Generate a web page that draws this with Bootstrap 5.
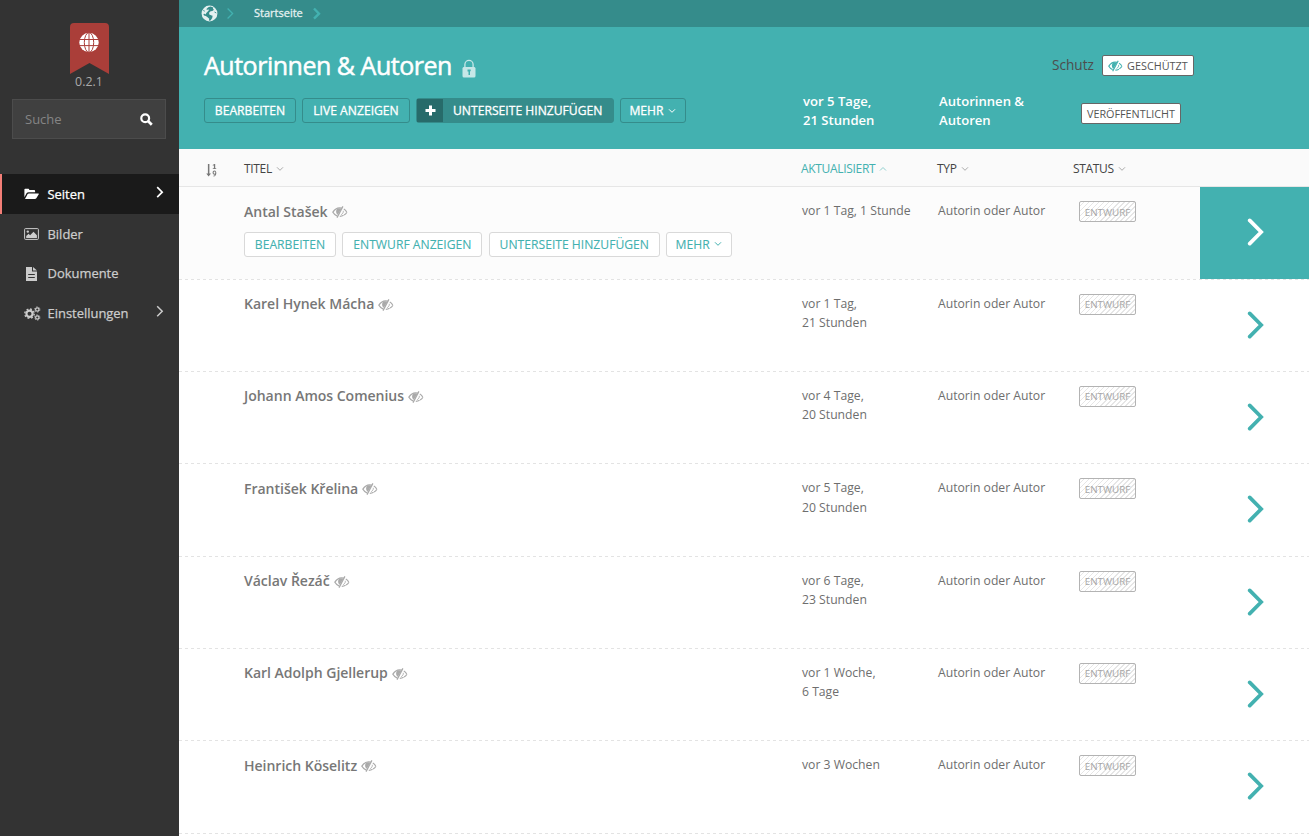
<!DOCTYPE html>
<html lang="de">
<head>
<meta charset="utf-8">
<meta name="viewport" content="width=device-width, initial-scale=1">
<title>Autorinnen &amp; Autoren</title>
<link href="https://cdn.jsdelivr.net/npm/bootstrap@5.3.0/dist/css/bootstrap.min.css" rel="stylesheet">
<style>
:root { --teal: #43b1b0; --teal-dark: #358c8b; --teal-darker: #276b6a; }
body { font-family: "Open Sans", sans-serif; font-size: 12.2px; line-height: 19px; color: #666; background: #fff; overflow: hidden; }
a { color: inherit; text-decoration: none; }
svg { display: block; flex: none; fill: currentColor; }
.line-icon { fill: none; stroke: currentColor; }

.sidebar { width: 179px; background: #333; flex: none; color: #ccc; }
.brand { padding: 23px 1px 0 0; height: 99px; color: #aaa; font-size: 12.4px; }
.brand-version { line-height: 16px; }
.search { margin: 0 13px 0 12px; height: 40px; background: #404040; border: 1px solid #4c4c4c; padding: 0 12px; color: #858585; font-size: 13px; }
.menu { margin-top: 35px; }
.menu-link { height: 39.6px; padding: 1.4px 15px 0 21px; border-left: 3px solid transparent; font-size: 12.95px; -webkit-text-stroke: .25px currentColor; }
.menu-link.active { background: #1a1a1a; border-left-color: #f37e77; border-left-width: 2px; padding-left: 22px; color: #fff; }
.menu-icon { width: 23.5px; }
.menu-arrow { margin-top: -3px; }

.crumbs { height: 27px; background: var(--teal-dark); padding-left: 22px; color: #e3f0f0; font-size: 11px; -webkit-text-stroke: .3px currentColor; }
.crumbs a { margin: -2px 10px 0 20px; }
.crumb-sep { color: var(--teal); }
.page-head { height: 122px; background: var(--teal); color: #fff; }
.page-head h1 { font-size: 25px; line-height: 34px; font-weight: 400; margin: -1px 0 1px; letter-spacing: -.48px; -webkit-text-stroke: .5px #fff; }
.lock { color: #c7e7e7; margin: 10px 0 0 10px; }
.list-grid { display: grid; grid-template-columns: 65px 557px 136px 136px 127px 1fr; }
.head-title { grid-column: 1 / 3; padding: 22px 0 0 25px; }
.head-meta { font-weight: 600; font-size: 13.1px; padding: 65px 0 0 2px; }

.act { height: 25px; border: 1px solid #d9d9d9; border-radius: 3px; background: #fff; color: var(--teal); font-size: 12.15px; line-height: 23px; white-space: nowrap; display: flex; justify-content: center; align-items: center; text-transform: uppercase; -webkit-text-stroke: .1px currentColor; }
.page-head .act { background: transparent; border-color: var(--teal-dark); color: #fff; -webkit-text-stroke: .3px #fff; }
.page-head .act-solid { background: var(--teal-dark); justify-content: flex-start; }
.act-plus { width: 26px; height: 23px; background: var(--teal-darker); display: flex; align-items: center; justify-content: center; margin-right: 10px; }
.act-edit { width: 92px; } .act-live { width: 108px; } .act-add { width: 198px; } .act-more { width: 66px; gap: 4px; }
.act-more { padding-right: 1px; }
.act-draft { width: 140px; } .act-child { width: 171px; }

.tag { display: inline-flex; align-items: center; height: 21px; border: 1px solid #666; border-radius: 2px; background: #fff; color: #555; font-size: 10.8px; white-space: nowrap; text-transform: uppercase; justify-content: center; }
.tag-protected { width: 92px; gap: 4px; }
.tag-published { width: 100px; }
.tag-draft { width: 57px; border-color: #b3b3b3; color: #a6a6a6; font-size: 9.8px; padding-top: 1px; background: repeating-linear-gradient(-45deg, #fff 0 2.8px, #e6e6e6 2.8px 3.54px); }
.privacy { color: #4d4d4d; font-size: 13.6px; gap: 8px; padding: 28px 0 0; margin-left: -21px; white-space: nowrap; }
.privacy span { margin-top: -3px; }

.list-head { height: 38px; background: #fafafa; border-bottom: 1px solid #e6e6e6; color: #444; font-size: 12px; line-height: 37px; text-transform: uppercase; }
.order-link { padding: 14px 0 0 27px; color: #777; }
.sort-link { display: flex; align-items: center; gap: 4px; padding-top: 1px; letter-spacing: -.32px; }
.sort-link svg { color: #aaa; }
.sort-link.current { color: var(--teal); }
.sort-link.current svg { color: #8fd0cf; }
.page-row { height: 92.33px; position: relative; color: #6e6e6e; }
.page-row::after { content: ""; position: absolute; left: 0; right: 0; bottom: -.4px; height: 1px; background: repeating-linear-gradient(90deg, #e3e3e3 0 3px, transparent 3px 6px); }
.page-row.hovered { background: #fcfcfc; }
.row-title { padding-top: 13.7px; }
.row-name { font-size: 14.05px; line-height: 22px; font-weight: 600; color: #777; gap: 4px; letter-spacing: -.03px; }
.row-name svg { color: #aaa; margin-top: 1px; }
.row-cell { padding: 14.4px 0 0 1px; line-height: 19.3px; white-space: nowrap; }
.row-actions { gap: 6.4px; margin-top: 9.3px; }
.row-next { color: var(--teal); display: flex; align-items: center; justify-content: center; padding: 0 0 1px 2px; height: 92px; }
.hovered .row-next { background: var(--teal); color: #fff; padding-bottom: 2px; }
</style>
</head>
<body>
<svg width="0" height="0" class="position-absolute">
  <symbol id="eye" viewBox="0 0 16 12">
    <path d="M9.800 2.200C6 1.100 2.900 3 .9 6.200 1.800 7.800 3.200 9.100 5 9.800" fill="none" stroke="currentColor" stroke-width="1.300"/>
    <path d="M4.700 3.200C3.600 5.200 4 7.400 5.700 8.800L9.300 2.900C7.600 2 5.700 2.200 4.700 3.200z"/>
    <path d="M10.900.4L5 11.600" stroke="currentColor" stroke-width="1.300"/>
    <path d="M11.800 3C13.200 3.800 14.200 5 15 6.200 13.500 8.500 11 10.200 7.800 10.400" fill="none" stroke="currentColor" stroke-width="1.200" stroke-dasharray="4 .6"/>
    <path d="M11.300 4.800c.3 1.700-.6 3-2.200 3.900" fill="none" stroke="currentColor" stroke-width=".8"/>
  </symbol>
  <symbol id="down" viewBox="0 0 8 6"><path d="M1 1.300l3 3 3-3" fill="none" stroke="currentColor" stroke-width="1"/></symbol>
  <symbol id="up" viewBox="0 0 8 6"><path d="M1 4.500l3-3 3 3" fill="none" stroke="currentColor" stroke-width="1"/></symbol>
  <symbol id="next" viewBox="0 0 18 28"><path d="M2.700 2.400L14.200 14 2.700 25.600" fill="none" stroke="currentColor" stroke-width="3.700" stroke-linecap="round"/></symbol>
</svg>
<div class="d-flex vh-100">
  <aside class="sidebar">
    <div class="brand d-flex flex-column align-items-center">
      <svg width="39" height="51" viewBox="0 0 39 51"><path d="M0 51V4a4 4 0 0 1 4-4h31a4 4 0 0 1 4 4v47L19.500 40z" fill="#aa3e39"/>
        <circle cx="19" cy="19.500" r="9.700" fill="#fff"/>
        <path d="M9 16.500h20M9 22.600h20M19 9.500v20" stroke="#aa3e39" stroke-width="1" fill="none"/><ellipse cx="19" cy="19.500" rx="4.700" ry="9.900" stroke="#aa3e39" fill="none"/></svg>
      <span class="brand-version">0.2.1</span>
    </div>
    <div class="search d-flex align-items-center justify-content-between">
      <span>Suche</span>
      <svg class="line-icon text-white" width="13" height="13" viewBox="0 0 13 13" stroke-width="2.200"><circle cx="5.200" cy="5.200" r="3.900"/><path d="M8 8l3.800 3.800" stroke-width="2.700"/></svg>
    </div>
    <nav class="menu">
      <a href="#" class="menu-link active d-flex align-items-center"><span class="menu-icon"><svg width="15" height="12" viewBox="0 0 15 12"><path d="M.4 9.300V1.600Q.4.700 1.300.700h3.100q.8 0 .8.800v.5h5q.9 0 .9.900v1.300H4.600q-1.200 0-1.900.9z"/><path d="M1 11l2.400-4.600Q3.900 5.500 5 5.500h9.300q.8 0 .4.800L12.500 10q-.6 1-1.700 1z"/></svg></span><span class="flex-grow-1">Seiten</span><svg class="line-icon menu-arrow" width="8" height="13" viewBox="0 0 8 13" stroke-width="1.700"><path d="M1.200 1.200l5 5-5 5"/></svg></a>
      <a href="#" class="menu-link d-flex align-items-center"><span class="menu-icon"><svg width="15" height="12" viewBox="0 0 15 12"><path class="line-icon" d="M1.500.6h12q.9 0 .9.900v9q0 .9-.9.900h-12q-.9 0-.9-.9v-9q0-.9.900-.9z" stroke-width="1"/><circle cx="3.800" cy="3.600" r="1.200"/><path d="M2.200 10V8l2.400-2.200L6.100 7.200 9.500 3.800l3.400 3.400V10z"/></svg></span>Bilder</a>
      <a href="#" class="menu-link d-flex align-items-center"><span class="menu-icon"><svg width="15" height="14" viewBox="0 0 15 14"><path fill-rule="evenodd" d="M2 0h6v4.500h5V14H2zM4.200 7v1h6.600V7zm0 3v1h6.600v-1zM9 0l4 3.600H9z"/></svg></span>Dokumente</a>
      <a href="#" class="menu-link d-flex align-items-center"><span class="menu-icon"><svg class="line-icon" width="17" height="15" viewBox="0 0 17 15"><circle cx="5.500" cy="7.700" r="3.100" stroke-width="2.200"/><circle cx="5.500" cy="7.700" r="4.700" stroke-width="1.400" stroke-dasharray="1.850 1.850"/><circle cx="13.300" cy="3.500" r="1.700" stroke-width="1.200"/><circle cx="13.300" cy="3.500" r="2.600" stroke-width=".9" stroke-dasharray="1.400 1.320"/><circle cx="13.300" cy="11.500" r="1.700" stroke-width="1.200"/><circle cx="13.300" cy="11.500" r="2.600" stroke-width=".9" stroke-dasharray="1.400 1.320"/></svg></span><span class="flex-grow-1">Einstellungen</span><svg class="line-icon menu-arrow" width="8" height="13" viewBox="0 0 8 13" stroke-width="1.500"><path d="M1.200 1.200l5 5-5 5"/></svg></a>
    </nav>
  </aside>

  <main class="flex-grow-1">
    <nav class="crumbs d-flex align-items-center">
      <svg width="17" height="17" viewBox="0 0 17 17"><circle cx="8.500" cy="8.500" r="7.900"/><path fill="#358c8b" d="M7.300 2.200l2.200-.6 2.800 1-.4 1.500 1.200.6-1.800 1.400-1.700.2-1.500 1.500.2 1.600 2.300 1.100 1 .3-.4 2.200-1.600 2.600-1.700.1.300-2-1.600-1.500-1.700-1.200-1.900-.4-.6-1.600 1.200-.3 1.100.7.6-1.300L7 6.300l1.200-1.600-1.200-.3-1.100.6-.4-1z"/><path fill="none" stroke="#358c8b" stroke-width=".9" d="M2.300 5.500l1.500.7M13.500 7l1.800 1"/></svg>
      <svg class="line-icon crumb-sep" style="margin-left:9px" width="7" height="13" viewBox="0 0 7 13" stroke-width="1.300"><path d="M.6 1.500l5 5-5 5"/></svg>
      <a href="#">Startseite</a>
      <svg class="line-icon crumb-sep" width="9" height="13" viewBox="0 0 9 13" stroke-width="2.400"><path d="M1 1.500l5 5.200-5 5"/></svg>
    </nav>
    <header class="page-head list-grid">
      <div class="head-title">
        <div class="d-flex"><h1>Autorinnen &amp; Autoren</h1>
          <svg class="lock" width="14" height="19" viewBox="0 0 14 19"><path d="M2.900 9V5.500a4.100 4.100 0 0 1 8.200 0V9" fill="none" stroke="currentColor" stroke-width="1.300"/><path fill-rule="evenodd" d="M1.500 8h11l1 1v8q0 1.500-1.500 1.500H2Q.5 18.500.5 17V9zM5.500 10.500v2h1V16h1.500v-3.500l.7-.5v-1.500z"/></svg></div>
        <div class="d-flex" style="gap:6px;margin-top:15px">
          <a href="#" class="act act-edit">Bearbeiten</a><a href="#" class="act act-live">Live anzeigen</a><a href="#" class="act act-solid act-add"><span class="act-plus"><svg width="11" height="11" viewBox="0 0 11 11"><path d="M4 .5h3V4h3.500v3H7v3.500H4V7H.5V4H4z"/></svg></span>Unterseite hinzufügen</a><a href="#" class="act act-more">Mehr <svg width="8" height="6"><use href="#down"/></svg></a>
        </div>
      </div>
      <div class="head-meta">vor 5 Tage,<br>21 Stunden</div>
      <div class="head-meta">Autorinnen &amp;<br>Autoren</div>
      <div><div class="privacy d-flex align-items-center"><span>Schutz</span><a href="#" class="tag tag-protected"><svg width="15" height="12" style="color:var(--teal)"><use href="#eye"/></svg>Geschützt</a></div>
        <div style="padding:27px 0 0 8px"><a href="#" class="tag tag-published">Veröffentlicht</a></div></div>
    </header>
    <div class="list-head list-grid">
      <div class="order-link"><svg width="12" height="14" viewBox="0 0 12 14"><path d="M1.900 1h1.500v9.500H5L2.600 13.400.3 10.500h1.600z"/><path d="M6.700 2.100L8.300.9h.9v4.300h1v.9H6.800v-.9h1.100V2.200l-1 .6z"/><path fill-rule="evenodd" d="M8.500 7.600c2.600 0 2.500 5.900-.8 5.900l-.6-.8c1.100 0 1.700-.5 2-1.300-1.200.7-2.500-.3-2.500-1.700 0-1.200.8-2.100 1.900-2.100zm0 .9c-1.200 0-1.100 2.300 0 2.300s1.100-2.300 0-2.300z"/></svg></div>
      <a href="#" class="sort-link">Titel <svg width="8" height="6"><use href="#down"/></svg></a>
      <a href="#" class="sort-link current">Aktualisiert <svg width="8" height="6"><use href="#up"/></svg></a>
      <a href="#" class="sort-link">Typ <svg width="8" height="6"><use href="#down"/></svg></a>
      <a href="#" class="sort-link">Status <svg width="8" height="6"><use href="#down"/></svg></a>
    </div>
    <div id="pages"></div>
  </main>
</div>
<script src="https://cdn.jsdelivr.net/npm/bootstrap@5.3.0/dist/js/bootstrap.bundle.min.js"></script>
<script>
const pages = [
  ["Antal Stašek", "vor 1 Tag, 1 Stunde"],
  ["Karel Hynek Mácha", "vor 1 Tag,<br>21 Stunden"],
  ["Johann Amos Comenius", "vor 4 Tage,<br>20 Stunden"],
  ["František Křelina", "vor 5 Tage,<br>20 Stunden"],
  ["Václav Řezáč", "vor 6 Tage,<br>23 Stunden"],
  ["Karl Adolph Gjellerup", "vor 1 Woche,<br>6 Tage"],
  ["Heinrich Köselitz", "vor 3 Wochen"]
];
const actions = `<div class="row-actions d-flex"><a href="#" class="act act-edit">Bearbeiten</a><a href="#" class="act act-draft">Entwurf anzeigen</a><a href="#" class="act act-child">Unterseite hinzufügen</a><a href="#" class="act act-more">Mehr <svg width="8" height="6"><use href="#down"/></svg></a></div>`;
document.getElementById("pages").innerHTML = pages.map(([name, updated], i) => `
  <div class="page-row list-grid ${i === 0 ? "hovered" : ""}">
    <div></div>
    <div class="row-title"><div class="row-name d-flex align-items-center">${name}<svg width="16" height="12"><use href="#eye"/></svg></div>${i === 0 ? actions : ""}</div>
    <div class="row-cell">${updated}</div>
    <div class="row-cell">Autorin oder Autor</div>
    <div class="row-cell" style="padding-left:6px"><span class="tag tag-draft">Entwurf</span></div>
    <a href="#" class="row-next"><svg width="18" height="28"><use href="#next"/></svg></a>
  </div>`).join("");
</script>
</body>
</html>
